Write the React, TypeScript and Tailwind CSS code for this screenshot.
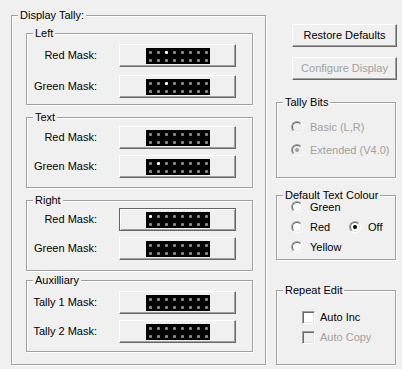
import React from 'react';

type BoxProps = { title: string; className?: string; children?: React.ReactNode };

// etched windows group box (no padding here, the legend follows the padding)
function GroupBox({ title, className = '', children }: BoxProps) {
  return (
    <fieldset
      className={`border border-[#a0a0a0] shadow-[1px_1px_0_#fff,inset_1px_1px_0_#fff] ${className}`}
    >
      <legend className="ml-[6px] px-[2px] leading-[13px] bg-[#f0f0f0] whitespace-nowrap">
        {title}
      </legend>
      {children}
    </fieldset>
  );
}

type BtnProps = {
  className?: string;
  disabled?: boolean;
  focused?: boolean;
  children?: React.ReactNode;
};

function Btn({ className = '', disabled, focused, children }: BtnProps) {
  const edge = focused
    ? 'border-[#646464] shadow-[inset_1px_1px_0_#fff,inset_-1px_-1px_0_#a0a0a0]'
    : 'border-t-white border-l-white border-r-[#696969] border-b-[#696969] shadow-[inset_-1px_-1px_0_#a0a0a0]';
  return (
    <div
      className={`h-[23px] flex items-center justify-center border bg-[#f0f0f0] whitespace-nowrap ${edge} ${
        disabled ? 'text-[#a0a0a0]' : 'text-black'
      } ${className}`}
    >
      {children}
    </div>
  );
}

function Mask({ lit = -1 }: { lit?: number }) {
  return (
    <div className="w-[64px] h-[16px] bg-black pt-[3px] pl-[3px] grid grid-cols-[repeat(8,3px)] auto-rows-[3px] gap-[5px] content-start">
      {Array.from({ length: 16 }).map((_, i) => (
        <span
          key={i}
          className={`w-[3px] h-[3px] rounded-[1px] ${i === lit ? 'bg-white' : 'bg-[#8a8a8a]'}`}
        />
      ))}
    </div>
  );
}

function MaskRow({ label, lit, focused }: { label: string; lit?: number; focused?: boolean }) {
  return (
    <div className="flex items-center">
      <span className="w-[70px] text-right whitespace-nowrap">{label}</span>
      <Btn focused={focused} className="ml-[22px] w-[117px]">
        <Mask lit={lit} />
      </Btn>
    </div>
  );
}

function Radio({ label, checked, disabled }: { label: string; checked?: boolean; disabled?: boolean }) {
  return (
    <div className="flex items-center h-[14px]">
      <span className="w-[12px] h-[12px] shrink-0 rounded-full border border-t-[#a0a0a0] border-l-[#a0a0a0] border-r-white border-b-white flex items-center justify-center">
        <span
          className={`w-[10px] h-[10px] rounded-full border border-t-[#696969] border-l-[#696969] border-r-[#e3e3e3] border-b-[#e3e3e3] flex items-center justify-center ${
            disabled ? 'bg-[#f0f0f0]' : 'bg-white'
          }`}
        >
          {checked && (
            <span className={`w-[4px] h-[4px] rounded-full ${disabled ? 'bg-[#a0a0a0]' : 'bg-black'}`} />
          )}
        </span>
      </span>
      <span className={`ml-[7px] whitespace-nowrap ${disabled ? 'text-[#a0a0a0]' : ''}`}>{label}</span>
    </div>
  );
}

function Check({ label, disabled }: { label: string; disabled?: boolean }) {
  return (
    <div className="flex items-center h-[14px]">
      <span
        className={`w-[13px] h-[13px] shrink-0 border border-t-[#a0a0a0] border-l-[#a0a0a0] border-r-white border-b-white shadow-[inset_1px_1px_0_#696969,inset_-1px_-1px_0_#e3e3e3] ${
          disabled ? 'bg-[#f0f0f0]' : 'bg-white'
        }`}
      />
      <span className={`ml-[5px] whitespace-nowrap ${disabled ? 'text-[#a0a0a0]' : ''}`}>{label}</span>
    </div>
  );
}

export default function App() {
  return (
    <div className="w-[402px] h-[369px] overflow-hidden bg-[#f0f0f0] flex items-start pl-[11px] pt-[9px] text-[11px] leading-[13px] text-black font-['Liberation_Sans',Arial,sans-serif]">
      <GroupBox title="Display Tally:" className="w-[255px] h-[356px]">
        <div className="pl-[14px] flex flex-col">
          <GroupBox title="Left" className="mt-[5px] w-[227px] h-[78px]">
            <div className="flex flex-col pt-[4px] gap-[8px]">
              <MaskRow label="Red Mask:" lit={2} />
              <MaskRow label="Green Mask:" lit={2} />
            </div>
          </GroupBox>
          <GroupBox title="Text" className="mt-[6px] w-[227px] h-[77px]">
            <div className="flex flex-col pt-[2px] gap-[6px]">
              <MaskRow label="Red Mask:" />
              <MaskRow label="Green Mask:" lit={1} />
            </div>
          </GroupBox>
          <GroupBox title="Right" className="mt-[6px] w-[227px] h-[77px]">
            <div className="flex flex-col pt-[1px] gap-[6px]">
              <MaskRow label="Red Mask:" lit={0} focused />
              <MaskRow label="Green Mask:" />
            </div>
          </GroupBox>
          <GroupBox title="Auxilliary" className="mt-[3px] w-[227px] h-[78px]">
            <div className="flex flex-col pt-[4px] gap-[6px]">
              <MaskRow label="Tally 1 Mask:" />
              <MaskRow label="Tally 2 Mask:" />
            </div>
          </GroupBox>
        </div>
      </GroupBox>

      <div className="ml-[10px] w-[120px] flex flex-col">
        <Btn className="mt-[15px] ml-[16px] w-[105px]">Restore Defaults</Btn>
        <Btn disabled className="mt-[10px] ml-[16px] w-[105px]">
          Configure Display
        </Btn>
        <GroupBox title="Tally Bits" className="mt-[16px] h-[82px]">
          <div className="flex flex-col pl-[14px] pt-[11px] gap-[9px]">
            <Radio disabled label="Basic (L,R)" />
            <Radio disabled checked label="Extended (V4.0)" />
          </div>
        </GroupBox>
        <GroupBox title="Default Text Colour" className="mt-[11px] h-[71px]">
          <div className="flex flex-col pl-[14px] -mt-[2px] gap-[6px]">
            <Radio label="Green" />
            <div className="flex">
              <div className="w-[58px]">
                <Radio label="Red" />
              </div>
              <Radio label="Off" checked />
            </div>
            <Radio label="Yellow" />
          </div>
        </GroupBox>
        <GroupBox title="Repeat Edit" className="mt-[24px] h-[81px]">
          <div className="flex flex-col pl-[25px] pt-[13px] gap-[6px]">
            <Check label="Auto Inc" />
            <Check disabled label="Auto Copy" />
          </div>
        </GroupBox>
      </div>
    </div>
  );
}
